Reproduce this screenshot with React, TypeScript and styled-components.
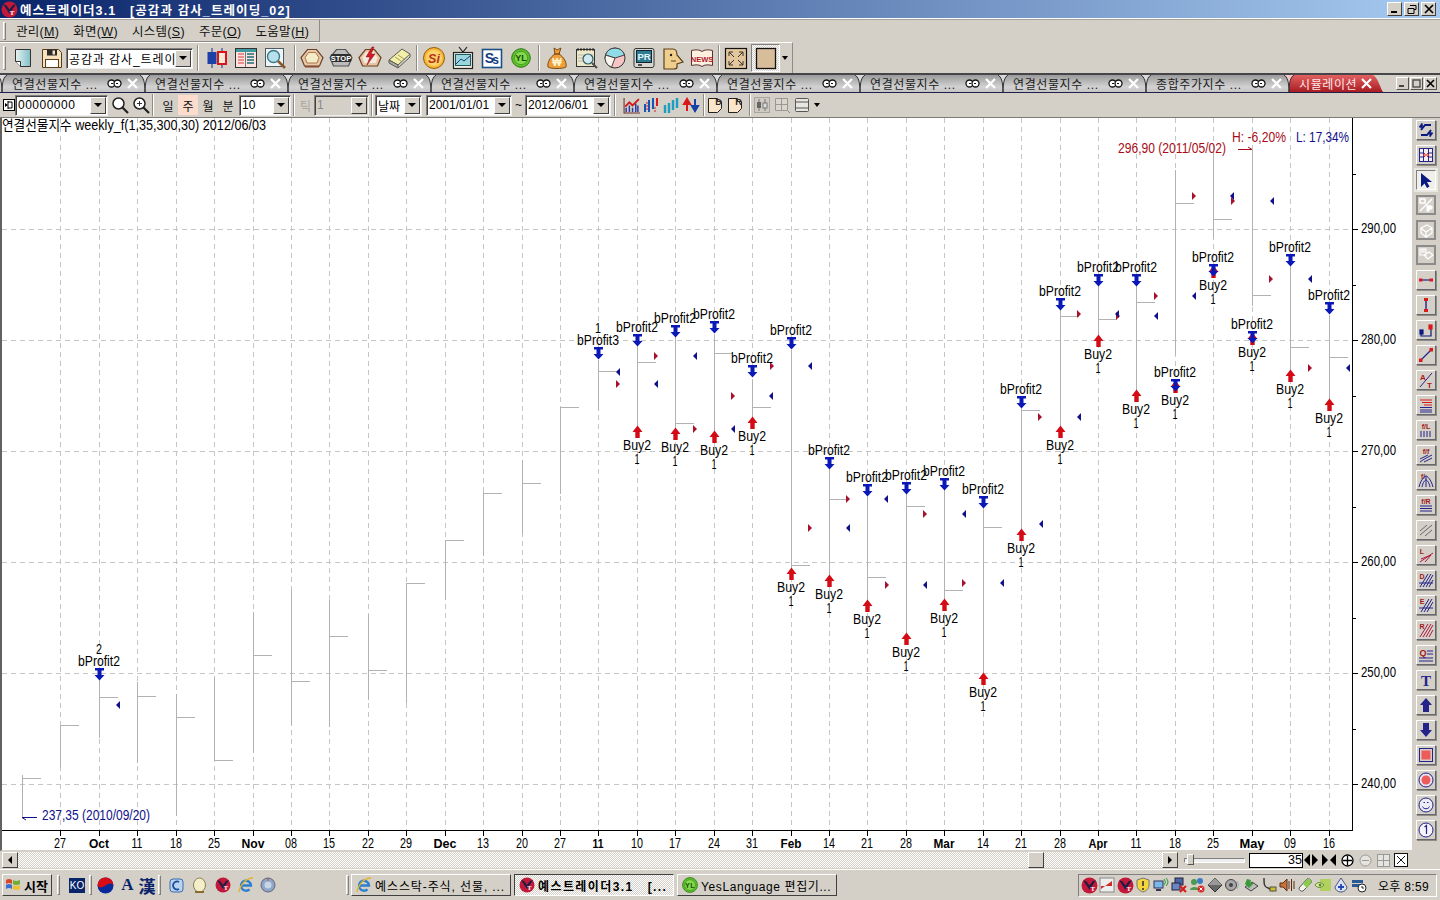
import React from 'react';
import styled, { createGlobalStyle } from 'styled-components';

const UI_FONT = `"Liberation Sans", "Noto Sans CJK KR", sans-serif`;

const GlobalStyle = createGlobalStyle`
	html, body { margin: 0; padding: 0; background: #d4d0c8; overflow: hidden; }
	* { box-sizing: border-box; }
`;

// bars: x, high, low, close
const BARS: number[][] = [
	[22, 775, 817, 778], [60, 725, 768, 725], [99, 680, 738, 697], [137, 682, 763, 696],
	[176, 694, 816, 717], [214, 677, 760, 760], [253, 612, 753, 655], [291, 590, 725, 681],
	[329, 600, 727, 636], [368, 615, 700, 670], [406, 583, 703, 583], [445, 540, 600, 540],
	[483, 492, 556, 493], [522, 460, 534, 483], [560, 407, 494, 407], [598, 360, 410, 371],
	[637, 345, 435, 362], [675, 335, 430, 423], [714, 335, 435, 353], [752, 380, 425, 407],
	[791, 350, 570, 565], [829, 470, 578, 499], [867, 497, 603, 577], [906, 493, 636, 506],
	[944, 490, 600, 590], [983, 510, 675, 527], [1021, 410, 530, 410], [1060, 310, 430, 316],
	[1098, 285, 337, 319], [1136, 285, 392, 302], [1175, 170, 355, 203], [1213, 152, 238, 219],
	[1252, 150, 306, 295], [1290, 265, 372, 347], [1329, 315, 400, 357],
];

const BUYS: number[][] = [
	[637, 445], [675, 447], [714, 450], [752, 436], [791, 587], [829, 594], [867, 619], [906, 652],
	[944, 618], [983, 692], [1021, 548], [1060, 445], [1098, 354], [1136, 409], [1175, 400],
	[1213, 285], [1252, 352], [1290, 389], [1329, 418],
];

const PROFITS: [number, number, string?][] = [
	[99, 661, '2'], [598, 340, '1'], [637, 327], [675, 318], [714, 314], [752, 358], [791, 330],
	[829, 450], [867, 477], [906, 475], [944, 471], [983, 489], [1021, 389], [1060, 291],
	[1098, 267], [1136, 267], [1175, 372], [1213, 257], [1252, 324], [1290, 247], [1329, 295],
];

const RED_MARKS: number[][] = [
	[618, 384], [656, 356], [695, 429], [733, 396], [772, 366], [810, 528], [848, 499], [887, 585],
	[925, 514], [964, 583], [1040, 417], [1079, 314], [1118, 316], [1156, 296], [1194, 196],
	[1233, 201], [1271, 279], [1310, 368],
];

const BLUE_MARKS: number[][] = [
	[118, 705], [618, 372], [656, 384], [695, 356], [733, 429], [771, 396], [810, 366], [848, 528],
	[886, 499], [925, 585], [964, 514], [1002, 583], [1041, 524], [1079, 417], [1117, 314],
	[1156, 316], [1194, 296], [1232, 196], [1272, 201], [1310, 279], [1348, 368],
];

// x, label, drawn width, bold
const X_TICKS: [number, string, number, boolean?][] = [
	[60, '27', 12], [99, 'Oct', 20, true], [137, '11', 11], [176, '18', 12], [214, '25', 12], [253, 'Nov', 23, true],
	[291, '08', 12], [329, '15', 12], [368, '22', 12], [406, '29', 12], [445, 'Dec', 23, true], [483, '13', 12],
	[522, '20', 12], [560, '27', 12], [598, '11', 11, true], [637, '10', 12], [675, '17', 12], [714, '24', 12],
	[752, '31', 12], [791, 'Feb', 21, true], [829, '14', 12], [867, '21', 12], [906, '28', 12], [944, 'Mar', 21, true],
	[983, '14', 12], [1021, '21', 12], [1060, '28', 12], [1098, 'Apr', 19, true], [1136, '11', 11], [1175, '18', 12],
	[1213, '25', 12], [1252, 'May', 25, true], [1290, '09', 12], [1329, '16', 12],
];

const PRICE_LINES: [number, string][] = [
	[229, '290,00'], [340, '280,00'], [451, '270,00'], [562, '260,00'], [673, '250,00'], [784, '240,00'],
];
const MINOR_TICKS = [174, 285, 396, 507, 618, 729];

const Window = styled.div`
	width: 1440px;
	height: 900px;
	display: flex;
	flex-direction: column;
	background: #d4d0c8;
	font-family: ${UI_FONT};
	font-size: 12px;
	color: #000;
	overflow: hidden;
`;

const TitleBar = styled.div`
	height: 18px;
	flex: none;
	display: flex;
	align-items: center;
	padding-left: 1px;
	background: linear-gradient(90deg, #0a246a 0%, #a6caf0 100%);
	color: #fff;
	font-weight: 700;
	font-size: 12.5px;
	letter-spacing: 1.1px;
	white-space: pre;
`;

const TitleText = styled.span`
	margin-left: 2px;
	flex: 1;
`;

const CaptionButtons = styled.div`
	display: flex;
	gap: 2px;
	margin-right: 4px;
`;

const CaptionButton = styled.div`
	width: 15px;
	height: 14px;
	background: #d4d0c8;
	border: 1px solid;
	border-color: #fff #404040 #404040 #fff;
	display: flex;
	align-items: center;
	justify-content: center;
`;

const TitleRule = styled.div`
	height: 2px;
	flex: none;
	background: #fff;
	border-bottom: 1px solid #a5a29b;
`;

const MenuRow = styled.div`
	height: 22px;
	flex: none;
	display: flex;
	align-items: stretch;
`;

const MenuBand = styled.div`
	width: 320px;
	display: flex;
	align-items: center;
	padding-left: 3px;
	border-right: 1px solid #8f8c85;
	border-bottom: 1px solid #8f8c85;
	font-size: 12.5px;
	letter-spacing: 0.3px;
`;

const Grip = styled.div<{ $h: number; $mr?: number }>`
	width: 3px;
	height: ${p => p.$h}px;
	flex: none;
	margin-right: ${p => p.$mr ?? 0}px;
	border: 1px solid;
	border-color: #fff #808080 #808080 #fff;
`;

const MenuItem = styled.span`
	margin-left: 10px;
	margin-right: 4px;
	color: #111;
	u { text-underline-offset: 1px; }
`;

const ToolRow = styled.div`
	height: 31px;
	flex: none;
	display: flex;
`;

const ToolBand = styled.div`
	width: 793px;
	display: flex;
	align-items: center;
	padding-left: 3px;
	border-top: 1px solid #fff;
	border-right: 1px solid #8f8c85;
`;

const ToolSlot = styled.div<{ $w?: number }>`
	width: ${p => p.$w ?? 29}px;
	height: 28px;
	flex: none;
	display: flex;
	align-items: center;
	justify-content: center;
`;

const PressedSlot = styled(ToolSlot)`
	margin-left: 1px;
	background: repeating-conic-gradient(#d4d0c8 0 25%, #fff 0 50%) 0 0 / 2px 2px;
	border: 1px solid;
	border-color: #808080 #fff #fff #808080;
`;

const ToolSep = styled.div<{ $ml?: number; $mr?: number; $h?: number }>`
	width: 2px;
	height: ${p => p.$h ?? 26}px;
	flex: none;
	margin-left: ${p => p.$ml ?? 2}px;
	margin-right: ${p => p.$mr ?? 2}px;
	border-left: 1px solid #8f8c85;
	border-right: 1px solid #fff;
`;

const Combo = styled.div<{ $w: number; $off?: boolean; $ml?: number; $ls?: number }>`
	width: ${p => p.$w}px;
	height: 21px;
	flex: none;
	margin-left: ${p => p.$ml ?? 0}px;
	display: flex;
	align-items: center;
	border: 1px solid;
	border-color: #808080 #eee #eee #808080;
	box-shadow: inset 1px 1px 0 #404040;
	padding-left: 2px;
	letter-spacing: ${p => p.$ls ?? 0}px;
	color: ${p => (p.$off ? '#8a8a8a' : '#000')};
	background: ${p => (p.$off ? '#d4d0c8' : '#fff')};
	white-space: nowrap;
	overflow: hidden;
`;

const ComboText = styled.span`
	flex: 1;
	overflow: hidden;
`;

const ComboDrop = styled.span`
	width: 16px;
	height: 17px;
	flex: none;
	margin-right: 1px;
	background: #d4d0c8;
	border: 1px solid;
	border-color: #fff #404040 #404040 #fff;
	display: flex;
	align-items: center;
	justify-content: center;
	&::after {
		content: '';
		border-left: 4px solid transparent;
		border-right: 4px solid transparent;
		border-top: 4px solid #000;
	}
`;

const TabRow = styled.div`
	height: 20px;
	flex: none;
	display: flex;
	padding-left: 2px;
	border-top: 2px solid #46464a;
	border-bottom: 1px solid #20204a;
`;

const Tab = styled.div<{ $active?: boolean; $w?: number }>`
	width: ${p => p.$w ?? 143}px;
	flex: none;
	position: relative;
	display: flex;
	align-items: center;
	padding-left: 10px;
	font-size: 12px;
	letter-spacing: 0.6px;
	color: ${p => (p.$active ? '#ffe6e6' : '#1c1c1c')};
	white-space: nowrap;
	background: ${p =>
		p.$active ? 'linear-gradient(#e26060, #a81c22)' : 'linear-gradient(#9a9a9a, #d2d2d2 70%, #c4c4c4)'};
`;

const TabCurve = styled.svg`
	position: absolute;
	left: -5px;
	top: 0;
	width: 10px;
	height: 17px;
`;

const ActiveEnd = styled.svg`
	position: absolute;
	right: 0;
	top: 0;
	width: 10px;
	height: 17px;
`;

const TabLabel = styled.span<{ $w?: number }>`
	position: relative;
	width: ${p => p.$w ?? 95}px;
	flex: none;
`;

const TabClose = styled.span<{ $ml?: number }>`
	position: relative;
	margin-left: ${p => p.$ml ?? 5}px;
	display: flex;
`;

const TabLink = styled.span`
	position: relative;
	display: flex;
`;

const MdiButtons = styled.div`
	margin-left: auto;
	margin-right: 3px;
	display: flex;
	gap: 1px;
	align-items: center;
`;

const MdiButton = styled.div`
	width: 13px;
	height: 13px;
	background: #d4d0c8;
	border: 1px solid;
	border-color: #fff #555 #555 #fff;
	display: flex;
	align-items: center;
	justify-content: center;
`;

const ChartBar = styled.div`
	height: 25px;
	flex: none;
	display: flex;
	align-items: center;
	padding-left: 3px;
	border-bottom: 1px solid #7c7a74;
`;

const PeriodKey = styled.span<{ $on?: boolean; $off?: boolean; $w?: number }>`
	width: ${p => p.$w ?? 20}px;
	height: 20px;
	flex: none;
	display: flex;
	align-items: center;
	justify-content: center;
	font-size: 12px;
	background: ${p => (p.$on ? '#fbdccd' : 'transparent')};
	color: ${p => (p.$off ? '#a9a6a0' : '#111')};
`;

const Tilde = styled.span`
	width: 13px;
	text-align: center;
	flex: none;
`;

const BarSlot = styled.div<{ $w?: number }>`
	width: ${p => p.$w ?? 20}px;
	height: 22px;
	flex: none;
	display: flex;
	align-items: center;
	justify-content: center;
`;

const MainRow = styled.div`
	flex: 1;
	display: flex;
	min-height: 0;
`;

const ChartPane = styled.div`
	width: 1412px;
	flex: none;
	background: #fff;
	border-left: 2px solid #63625e;
	border-bottom: 1px solid #d4d0c8;
`;

const ChartSvg = styled.svg`
	display: block;
	width: 1410px;
	height: 732px;
`;

const ChartTextBase = styled.text<{ $c?: string; $bold?: boolean; $size?: number }>`
	font-family: ${UI_FONT};
	font-size: ${p => p.$size ?? 14}px;
	font-weight: ${p => (p.$bold ? 700 : 400)};
	fill: ${p => p.$c ?? '#000'};
	dominant-baseline: central;
`;

// the chart font is tall and narrow: the glyphs are squeezed to the width each label has
const ChartText = ({
	w,
	children,
	...rest
}: { w?: number; children: React.ReactNode } & React.ComponentProps<typeof ChartTextBase>) => (
	<ChartTextBase {...rest} {...(w ? { textLength: w, lengthAdjust: 'spacingAndGlyphs' } : {})}>
		{children}
	</ChartTextBase>
);

const SideTools = styled.div`
	flex: 1;
	display: flex;
	flex-direction: column;
	align-items: center;
	gap: 5px;
	padding-top: 2px;
`;

const SideButton = styled.div<{ $variant?: 'active' | 'muted' }>`
	width: 20px;
	height: 20px;
	flex: none;
	display: flex;
	align-items: center;
	justify-content: center;
	background: ${p => (p.$variant === 'active' ? '#f1efea' : '#d4d0c8')};
	border: ${p => (p.$variant === 'muted' ? '2px solid #8b8b8b' : '1px solid')};
	border-color: ${p =>
		p.$variant === 'muted'
			? '#8b8b8b'
			: p.$variant === 'active'
				? '#808080 #fff #fff #808080'
				: '#fff #66666e #66666e #fff'};
	box-shadow: ${p =>
		p.$variant === 'active' ? '0 0 0 2px #e9e7e2' : p.$variant === 'muted' ? 'none' : '1px 1px 0 #8f8c85'};
`;

const ScrollRow = styled.div`
	height: 18px;
	flex: none;
	display: flex;
	align-items: center;
	padding-left: 2px;
`;

const ScrollButton = styled.div`
	width: 16px;
	height: 16px;
	flex: none;
	background: #d4d0c8;
	border: 1px solid;
	border-color: #fff #404040 #404040 #fff;
	display: flex;
	align-items: center;
	justify-content: center;
`;

const ScrollTrack = styled.div`
	width: 1144px;
	height: 16px;
	flex: none;
	display: flex;
	justify-content: flex-end;
	padding-right: 118px;
	background: repeating-conic-gradient(#d4d0c8 0 25%, #fff 0 50%) 0 0 / 2px 2px;
`;

const ScrollThumb = styled.div`
	width: 16px;
	height: 16px;
	background: #d4d0c8;
	border: 1px solid;
	border-color: #fff #404040 #404040 #fff;
`;

const ZoomSlider = styled.div`
	width: 63px;
	height: 16px;
	flex: none;
	margin: 0 3px 0 5px;
	position: relative;
	&::before {
		content: '';
		position: absolute;
		left: 1px;
		right: 1px;
		top: 6px;
		height: 3px;
		border: 1px solid;
		border-color: #808080 #fff #fff #808080;
		background: #eee;
	}
`;

const ZoomHandle = styled.div`
	position: absolute;
	left: 4px;
	top: 2px;
	width: 7px;
	height: 11px;
	background: #d4d0c8;
	border: 1px solid;
	border-color: #fff #555 #555 #fff;
`;

const ZoomField = styled.div`
	width: 54px;
	height: 15px;
	flex: none;
	margin-right: -1px;
	background: #fff;
	border: 1px solid #000;
	text-align: right;
	font-size: 12.5px;
	line-height: 13px;
`;

const ZoomKey = styled.div<{ $w?: number }>`
	width: ${p => p.$w ?? 18}px;
	height: 16px;
	flex: none;
	display: flex;
	align-items: center;
	justify-content: center;
`;

const TaskBar = styled.div`
	height: 31px;
	flex: none;
	display: flex;
	align-items: center;
	padding: 0 3px 0 2px;
	border-top: 1px solid #fff;
	box-shadow: inset 0 1px 0 #d4d0c8;
`;

const StartButton = styled.div`
	width: 50px;
	height: 22px;
	flex: none;
	display: flex;
	align-items: center;
	gap: 3px;
	padding-left: 2px;
	font-weight: 700;
	font-size: 13px;
	background: #d4d0c8;
	border: 1px solid;
	border-color: #fff #404040 #404040 #fff;
`;

const TaskSep = styled.div<{ $ml: number; $mr: number }>`
	width: 3px;
	height: 20px;
	flex: none;
	margin-left: ${p => p.$ml}px;
	margin-right: ${p => p.$mr}px;
	border: 1px solid;
	border-color: #fff #808080 #808080 #fff;
`;

const LangBox = styled.div`
	width: 16px;
	height: 15px;
	flex: none;
	background: #0a246a;
	color: #fff;
	font-size: 10px;
	text-align: center;
	line-height: 15px;
`;

const QuickSlot = styled.div<{ $w?: number }>`
	width: ${p => p.$w ?? 23}px;
	height: 20px;
	flex: none;
	display: flex;
	align-items: center;
	justify-content: center;
`;

const LangLetter = styled.span`
	font-family: "Liberation Serif", "Noto Sans CJK KR", serif;
	font-weight: 700;
	font-size: 17px;
	color: #0a246a;
`;

const TaskButton = styled.div<{ $on?: boolean; $ls: number }>`
	width: 160px;
	height: 22px;
	flex: none;
	margin-right: 3px;
	display: flex;
	align-items: center;
	gap: 3px;
	padding-left: 4px;
	white-space: pre;
	overflow: hidden;
	letter-spacing: ${p => p.$ls}px;
	font-weight: ${p => (p.$on ? 700 : 400)};
	border: 1px solid;
	border-color: ${p => (p.$on ? '#404040 #fff #fff #404040' : '#fff #404040 #404040 #fff')};
	background: ${p =>
		p.$on ? 'repeating-conic-gradient(#d4d0c8 0 25%, #fff 0 50%) 0 0 / 2px 2px' : '#d4d0c8'};
`;

const Tray = styled.div`
	width: 359px;
	height: 23px;
	flex: none;
	margin-left: auto;
	display: flex;
	align-items: center;
	padding-left: 1px;
	border: 1px solid;
	border-color: #808080 #fff #fff #808080;
`;

const TraySlot = styled.div`
	width: 18px;
	height: 18px;
	flex: none;
	display: flex;
	align-items: center;
	justify-content: center;
`;

const Clock = styled.span`
	margin-left: 10px;
	letter-spacing: 0.3px;
	white-space: nowrap;
`;

const Icon = styled.svg`
	display: block;
	flex: none;
	overflow: visible;
`;

const IconText = styled.text<{ $size: number; $c: string; $serif?: boolean }>`
	font-family: ${p => (p.$serif ? '"Liberation Serif", serif' : UI_FONT)};
	font-size: ${p => p.$size}px;
	font-weight: 700;
	fill: ${p => p.$c};
	text-anchor: middle;
`;

type IconProps = { s?: number; children?: React.ReactNode };

// every little drawing below lives in its own 24-unit (toolbar) or 16-unit (small) box
const I = ({ s = 24, vb = 24, children }: IconProps & { vb?: number }) => (
	<Icon width={s} height={s} viewBox={`0 0 ${vb} ${vb}`}>
		{children}
	</Icon>
);

const VtLogo = ({ s = 16 }: { s?: number }) => (
	<I s={s} vb={16}>
		<circle cx="8" cy="8" r="7.5" fill="#c2183a" />
		<path d="M2 3l6 9 6-9-3 1-3 4-3-4z" fill="#1b1d44" />
		<IconText x="11" y="13" $size={6.5} $c="#fff" $serif>T</IconText>
	</I>
);

const YlBadge = ({ s = 20 }: { s?: number }) => (
	<I s={s} vb={20}>
		<circle cx="10" cy="10" r="9.3" fill="#5fbe2c" stroke="#2b7a14" />
		<circle cx="10" cy="10" r="6.6" fill="#86d84c" stroke="#2d8a18" strokeWidth=".6" />
		<IconText x="10" y="13.2" $size={9} $c="#114f0a">YL</IconText>
	</I>
);

const IeGlyph = ({ s = 16 }: { s?: number }) => (
	<I s={s} vb={16}>
		<path d="M3.500 8.500h9.500a5 5 0 10-1.500 3.800" fill="none" stroke="#2b7fd0" strokeWidth="2.400" />
		<path d="M1 15C2 8 8 1 15 1" fill="none" stroke="#e7b422" strokeWidth="1.300" />
	</I>
);

const NewDocIcon = () => (
	<I>
		<defs>
			<linearGradient id="docfill" x1="0" y1="0" x2="1" y2="0">
				<stop offset="0" stopColor="#e9f3f0" />
				<stop offset="1" stopColor="#7fbfc8" />
			</linearGradient>
		</defs>
		<path d="M4.5 3.5h15v17h-10l-5-5z" fill="url(#docfill)" stroke="#333" />
		<path d="M4.5 15.5h5v5" fill="#fff" stroke="#333" />
	</I>
);

const SaveIcon = () => (
	<I>
		<path d="M2.5 3.5h16l3 3v15h-19z" fill="#f6e2bf" stroke="#5a3c16" />
		<rect x="7" y="3.5" width="10" height="6" fill="#2b2b2b" />
		<rect x="12.5" y="4.5" width="2.5" height="4" fill="#f6e2bf" />
		<rect x="5.5" y="13.5" width="13" height="8" fill="#fff" stroke="#5a3c16" />
	</I>
);

const CandleIcon = () => (
	<I>
		<path d="M7 2v20M17 2v20" stroke="#1b2a88" />
		<rect x="2.5" y="6" width="9" height="12" fill="#1d3fa8" />
		<rect x="13" y="6" width="8" height="12" fill="#fbe9d8" stroke="#d81818" strokeWidth="2" />
	</I>
);

const GridSheetIcon = () => (
	<I>
		<rect x="1.5" y="2.5" width="21" height="19" fill="#fde3e0" stroke="#333" />
		<rect x="2" y="3" width="20" height="3" fill="#3f9aa0" />
		<path d="M4 8h6M4 11h6M4 14h6M4 17h6" stroke="#d93b3b" />
		<path d="M13 8h7M13 11h7M13 14h7M13 17h7" stroke="#1c6f78" strokeWidth="1.6" />
		<path d="M11.5 6v15" stroke="#777" />
	</I>
);

const LensDocIcon = () => (
	<I>
		<rect x="2.5" y="2.5" width="18" height="18" fill="#f0f4f6" stroke="#4b5b63" />
		<circle cx="10.5" cy="10.5" r="6" fill="#b8e0ec" stroke="#397a8a" strokeWidth="1.4" />
		<path d="M15 15l7 7" stroke="#8a5a2c" strokeWidth="2.6" />
	</I>
);

const hexPath = 'M7.5 3.500h9l6.500 8-3.500 8.500H4.500L1 11.500z';

const HexIcon = () => (
	<I>
		<path d={hexPath} fill="#e8c8a8" stroke="#6b4028" strokeWidth="1.2" />
		<path d="M8.500 6.500h7l3.500 5-2 5.500H7l-2-5.500z" fill="#f4ebc8" stroke="#a9754b" />
		<path d="M5 20h14v1.500H5z" fill="#8b4a2b" />
	</I>
);

const StopIcon = () => (
	<I>
		<path d={hexPath} fill="#bcbcbc" stroke="#555" strokeWidth="1.2" />
		<rect x="1.500" y="8" width="21" height="8" fill="#2d2d2d" rx="2" />
		<IconText x="12" y="14.600" $size={7.500} $c="#fff">STOP</IconText>
	</I>
);

const BoltIcon = () => (
	<I>
		<path d={hexPath} fill="#e8c4a0" stroke="#6b4028" strokeWidth="1.2" />
		<path d="M8 6h8l3.500 5.500-2 5.500H6.500l-2-5.500z" fill="#f5e9e0" />
		<path d="M14 1l-6 10h4l-3 8 8-11h-4l3-7z" fill="#d81a26" stroke="#7a1010" strokeWidth=".5" />
	</I>
);

const SlateIcon = () => (
	<I>
		<path d="M2 14L15 3l8 5-12 11z" fill="#f2efaa" stroke="#5a5a50" />
		<path d="M2 14l9 5v3l-9-5z" fill="#aaa" stroke="#5a5a50" />
		<path d="M11 22l12-11V8" fill="#d8d8c8" stroke="#5a5a50" />
		<path d="M8 11l6 4M11 9l6 4" stroke="#ab9c4a" />
	</I>
);

const SiIcon = () => (
	<I>
		<circle cx="12" cy="12" r="10.500" fill="#f7b733" stroke="#9a5a10" />
		<circle cx="12" cy="12" r="8" fill="#fbd36c" />
		<IconText x="12" y="16.500" $size={12.500} $c="#b8321a" style={{ fontStyle: 'italic' }}>Si</IconText>
	</I>
);

const TvIcon = () => (
	<I>
		<path d="M8 1l4 5 4-5" fill="none" stroke="#222" strokeWidth="1.2" />
		<rect x="2.500" y="6.500" width="19" height="16" fill="#f2efe0" stroke="#222" strokeWidth="1.2" />
		<rect x="4.500" y="8.500" width="15" height="11" fill="#9bd6dc" stroke="#1a5a66" />
		<path d="M5 18l5-5 3 2 6-5" fill="none" stroke="#163f80" />
	</I>
);

const SsIcon = () => (
	<I>
		<rect x="2.500" y="3.500" width="19" height="18" fill="#fff" stroke="#1c4f86" strokeWidth="1.600" />
		<IconText x="9.500" y="17" $size={14} $c="#143a80">S</IconText>
		<IconText x="15.500" y="18" $size={12} $c="#143a80">s</IconText>
	</I>
);

const BagIcon = () => (
	<I>
		<path d="M9 2l3 2 4-2-2 6c5 3 8 9 7 13-3 2-15 2-18 0-1-4 2-10 7-13z" fill="#ee9f3a" stroke="#7c4a12" />
		<path d="M9 8h6" stroke="#7c4a12" strokeWidth="1.400" />
		<IconText x="12" y="20" $size={10} $c="#fff6d0">₩</IconText>
	</I>
);

const CalendarIcon = () => (
	<I>
		<rect x="2.500" y="3.500" width="18" height="17" fill="#eee7c8" stroke="#333" />
		<path d="M4 2v3M7 2v3M10 2v3M13 2v3M16 2v3M19 2v3" stroke="#222" />
		<path d="M4 9h15M4 12h15M4 15h15" stroke="#bba" />
		<circle cx="14" cy="13" r="5" fill="#cfe9ef" stroke="#305a66" strokeWidth="1.200" />
		<path d="M18 17l5 5" stroke="#4a4a4a" strokeWidth="2" />
	</I>
);

const PieIcon = () => (
	<I>
		<circle cx="12" cy="12" r="10" fill="#f6c4c4" stroke="#333" />
		<path d="M2.500 9a10 10 0 0119 0l-9.500 3z" fill="#8fdce8" stroke="#444" />
		<path d="M12 12l-9.500-3a10 10 0 006 12.300z" fill="#f7f5ee" stroke="#444" />
	</I>
);

const PrIcon = () => (
	<I>
		<rect x="2" y="2.500" width="20" height="19" rx="2" fill="#d8d8d0" stroke="#333" />
		<rect x="4.500" y="4.500" width="15" height="12" fill="#2d7d92" stroke="#123" />
		<IconText x="12" y="14.300" $size={9.500} $c="#e8f6fa">PR</IconText>
		<path d="M6 19h4" stroke="#222" strokeWidth="1.500" />
	</I>
);

const FaceIcon = () => (
	<I>
		<path d="M3 3h9c3 0 4 3 4 6l6 7-6 2v3c0 1-1 2-3 2H3z" fill="#f0cf8e" stroke="#5c4218" strokeWidth="1.200" />
		<circle cx="10" cy="9" r="1.200" fill="#222" />
		<path d="M10 15h5" stroke="#5c4218" />
	</I>
);

const NewsIcon = () => (
	<I>
		<path d="M1.500 4.500c4-1 8-1 10.500 1 2.500-2 6.500-2 10.500-1v15c-4-1-8-1-10.500 1-2.500-2-6.500-2-10.500-1z" fill="#fdf0e0" stroke="#5b2f2f" />
		<IconText x="12" y="15.800" $size={7.500} $c="#b0182c">NEWS</IconText>
	</I>
);

const ExpandIcon = () => (
	<I>
		<rect x="1.500" y="2.500" width="21" height="20" fill="#e4c69c" stroke="#111" strokeWidth="1.200" />
		<path d="M5 6l5 5M19 6l-5 5M5 19l5-5M19 19l-5-5M5 6h4M5 6v4M19 6h-4M19 6v4M5 19h4M5 19v-4M19 19h-4M19 19v-4" stroke="#333" fill="none" />
	</I>
);

const SwatchIcon = () => (
	<I>
		<rect x="2.500" y="2.500" width="19" height="20" fill="#d8bd9a" stroke="#111" strokeWidth="1.300" />
	</I>
);

const TinyDrop = () => (
	<I s={8} vb={8}>
		<path d="M1 2h6L4 6z" fill="#000" />
	</I>
);

const PinIcon = () => (
	<I s={12} vb={12}>
		<rect x=".5" y=".5" width="11" height="11" fill="#fff" stroke="#000" />
		<path d="M5 2v8M5 3h4v6H5" fill="none" stroke="#000" />
		<path d="M2 4l3 2-3 2z" fill="#000" />
	</I>
);

const SearchIcon = ({ extra }: { extra?: boolean }) => (
	<I s={18} vb={18}>
		<circle cx="7.500" cy="7.500" r="5.500" fill="#fff" stroke="#222" strokeWidth="1.500" />
		<path d="M11.500 11.500l5.500 5.500" stroke="#222" strokeWidth="2.200" />
		{extra && <path d="M5 7.500h5M7.500 5v5" stroke="#333" />}
	</I>
);

const MiniChartIcon = () => (
	<I s={17} vb={16}>
		<path d="M1 1v14h15" fill="none" stroke="#6b3030" />
		<path d="M3 14V10M6 14V8M9 14V10M12 14V6M14 14V8" stroke="#2b3ea0" strokeWidth="1.400" />
		<path d="M2 9l4-4 3 3 6-6" fill="none" stroke="#d11b1b" strokeWidth="1.800" />
	</I>
);

const MiniBarsIcon = () => (
	<I s={16} vb={16}>
		<path d="M2 7v8M6 3v12M10 1v11" stroke="#1554b8" strokeWidth="2" />
		<path d="M14 1v8" stroke="#d81a1a" strokeWidth="2" />
		<path d="M4 5v9M12 10v5" stroke="#d81a1a" strokeWidth="1" strokeDasharray="2 1" />
	</I>
);

const RiseBarsIcon = () => (
	<I s={16} vb={16}>
		<path d="M2 8v8M6 6v10M10 3v10M14 1v10" stroke="#1a9fc0" strokeWidth="2.400" />
	</I>
);

const UpDownIcon = () => (
	<I s={16} vb={16}>
		<path d="M4 14V6M1 7l3-5 3 5z" stroke="#d81a1a" strokeWidth="2" fill="#d81a1a" />
		<path d="M12 2v8M9 9l3 5 3-5z" stroke="#1540a8" strokeWidth="2" fill="#1540a8" />
	</I>
);

const PageLetterIcon = ({ letter }: { letter: string }) => (
	<I s={18} vb={18}>
		<path d="M2.500 2.500h9v3h4v7l-4 4h-9z" fill="#fbe6cc" stroke="#222" />
		<IconText x="12.500" y="9" $size={9} $c="#2a2a2a">{letter}</IconText>
	</I>
);

const GreyCandleIcon = () => (
	<I s={16} vb={16}>
		<rect x=".5" y=".5" width="15" height="15" fill="#cfcbc3" stroke="#a8a59e" />
		<path d="M5 2v12M11 2v12" stroke="#777" />
		<rect x="3" y="5" width="4" height="6" fill="#666" />
		<rect x="9" y="6" width="4" height="5" fill="#ddd" stroke="#777" />
	</I>
);

const GreyGridIcon = () => (
	<I s={16} vb={16}>
		<path d="M1.500 1.500h12v12h-12zM7.500 1.500v12M1.500 7.500h12" fill="#d9d6cf" stroke="#9b9892" />
		<path d="M14 14l2 2" stroke="#888" />
	</I>
);

const WindowBoxIcon = () => (
	<I s={16} vb={16}>
		<rect x="1.500" y="1.500" width="13" height="13" rx="1" fill="#e8e6e0" stroke="#555" />
		<path d="M2 5h12M2 11h12" stroke="#555" />
	</I>
);

const LinkGlyph = () => (
	<I s={15} vb={15}>
		<circle cx="4.500" cy="7.500" r="3.500" fill="#fff" stroke="#111" strokeWidth="1.300" />
		<circle cx="10.500" cy="7.500" r="3.500" fill="#fff" stroke="#111" strokeWidth="1.300" />
		<path d="M4 7.500h2M9 7.500h2" stroke="#111" />
	</I>
);

const CloseGlyph = ({ c = '#fff' }: { c?: string }) => (
	<I s={11} vb={11}>
		<path d="M1 1l9 9M10 1l-9 9" stroke={c} strokeWidth="2.200" />
	</I>
);

const Curve = ({ bright }: { bright?: boolean }) => (
	<TabCurve viewBox="0 0 10 17">
		<path d="M0 0C3 2 5 6 5 17C5 6 7 2 10 0Z" fill={bright ? '#f3c8c8' : '#d9d9d9'} />
		<path d="M0 0C3 2 5 6 5 17C5 6 7 2 10 0" fill="none" stroke="#2e2e34" />
	</TabCurve>
);

// side tool faces, in a 16-unit box
const SIDE_FACES: { face: React.ReactNode; variant?: 'active' | 'muted' }[] = [
	{ face: <g fill="none" stroke="#0a1a80" strokeWidth="2"><path d="M13 3H7L3 8M3 13h6l4-5" /><path d="M1 5l3-4 1 5zM15 11l-3 4-1-5z" fill="#0a1a80" strokeWidth=".6" /></g> },
	{ face: <g><rect x="1.500" y="1.500" width="13" height="13" fill="#f4eef0" stroke="#23238a" /><path d="M5.500 1v14M10.500 1v14M1 6h4M1 10h4M11 6h4M11 10h4" stroke="#23238a" /><path d="M5 8h6M7 6L5 8l2 2M9 6l2 2-2 2" stroke="#d81a1a" fill="none" /></g> },
	{ face: <path d="M3 1v14l3.500-3.500L9 16l2.500-1.500L9 10h5z" fill="#0a1a80" />, variant: 'active' },
	{ face: <g stroke="#fff" fill="none" strokeWidth="1.500"><path d="M2 14L14 2" /><rect x="2" y="2" width="5" height="4" /><IconText x="11.500" y="14" $size={8} $c="#fff">P</IconText></g>, variant: 'muted' },
	{ face: <g fill="none" stroke="#fff" strokeWidth="1.200"><path d="M3 6l6-3 5 3-6 4zM3 6v5l5 4V10M14 6v5l-6 4" /></g>, variant: 'muted' },
	{ face: <g fill="none" stroke="#fff" strokeWidth="1.200"><path d="M2 2h6v6H2zM6 8l5-3 4 3-5 4z" /><path d="M4 2v4M6 2v4" /></g>, variant: 'muted' },
	{ face: <g><path d="M2 8h12" stroke="#23238a" strokeWidth="1.200" /><rect x="1" y="6.500" width="3.500" height="3" fill="#d81a1a" /><rect x="11.500" y="6.500" width="3.500" height="3" fill="#d81a1a" /></g> },
	{ face: <g><path d="M8 2v12" stroke="#23238a" strokeWidth="1.400" /><rect x="6" y="1" width="4" height="3" fill="#d81a1a" /><rect x="6" y="12" width="4" height="3" fill="#d81a1a" /></g> },
	{ face: <g fill="none" stroke="#0a1a80" strokeWidth="1.200"><path d="M3 9v5h10V3" /><rect x="2" y="8" width="3" height="4" fill="#0a1a80" /><rect x="11" y="3" width="3" height="4" fill="#d81a1a" stroke="#d81a1a" /></g> },
	{ face: <g><path d="M2 14L14 2" stroke="#23238a" strokeWidth="1.300" /><rect x="1" y="11.500" width="3.500" height="3.500" fill="#d81a1a" /><rect x="11.500" y="1" width="3.500" height="3.500" fill="#d81a1a" /></g> },
	{ face: <g><path d="M2 15L14 1" stroke="#23238a" /><IconText x="5" y="8" $size={8} $c="#b01818">A</IconText><IconText x="11.500" y="15.500" $size={8} $c="#b01818">T</IconText></g> },
	{ face: <g><path d="M2 3h12M4 5.500h10M6 8h8" stroke="#d81a1a" /><path d="M2 10.500h12M2 13h12M2 15h12" stroke="#23238a" /></g> },
	{ face: <g><IconText x="8" y="7" $size={7} $c="#a01818">f/L</IconText><path d="M3 9v6M6 9v6M9 9v6M12 9v6" stroke="#23238a" /></g> },
	{ face: <g><IconText x="8" y="7" $size={7} $c="#a01818">f/f</IconText><path d="M2 15C6 12 10 10 14 8M2 12l8-4M6 15l8-4" stroke="#23238a" fill="none" /></g> },
	{ face: <g><IconText x="5" y="7" $size={6.500} $c="#a01818">f/</IconText><path d="M1 15C3 7 7 4 8 4s5 3 7 11M4 15C5 10 7 8 8 8s3 2 4 7M8 4v11" stroke="#23238a" fill="none" /></g> },
	{ face: <g><IconText x="8" y="7" $size={7} $c="#a01818">f/R</IconText><path d="M2 9h12M2 11.500h12M2 14h12" stroke="#23238a" /></g> },
	{ face: <path d="M2 13L14 3M2 9l7-6M7 14l7-6" stroke="#666" fill="none" /> },
	{ face: <g><IconText x="4" y="7" $size={7} $c="#a01818">L</IconText><path d="M2 15l13-9M7 15l6-7M3 12l10-4" stroke="#b01840" fill="none" /></g> },
	{ face: <g><IconText x="4" y="7" $size={7} $c="#a01818">D</IconText><path d="M2 15l8-13M5 15l8-13M8 15l7-12M11 15l4-7M1 11h14" stroke="#23238a" fill="none" /></g> },
	{ face: <g><IconText x="4" y="7" $size={7} $c="#a01818">E</IconText><path d="M3 15l8-13M6 15l8-13M9 15l6-10M1 11h14" stroke="#23238a" fill="none" /></g> },
	{ face: <g><IconText x="4" y="7" $size={7} $c="#a01818">R</IconText><path d="M2 15l8-13M5 15l8-13M8 15l7-12M11 15l4-7" stroke="#b01840" fill="none" /></g> },
	{ face: <g><IconText x="5" y="9" $size={9} $c="#a01818">Q</IconText><path d="M9 4h6M9 7h6M1 11h14M1 14h14" stroke="#23238a" /></g> },
	{ face: <IconText x="8" y="14" $size={15} $c="#23238a" $serif>T</IconText> },
	{ face: <path d="M8 1l6 7h-3v7H5V8H2z" fill="#23238a" /> },
	{ face: <path d="M8 15l6-7h-3V1H5v7H2z" fill="#23238a" /> },
	{ face: <g><rect x="1.500" y="1.500" width="13" height="13" fill="#d4d0c8" stroke="#23238a" /><rect x="3.500" y="3.500" width="9" height="9" fill="#ef5a5a" /></g> },
	{ face: <g><circle cx="8" cy="8" r="7" fill="#e4e0ec" stroke="#23238a" /><circle cx="8" cy="8" r="4.500" fill="#ef5a5a" /></g> },
	{ face: <g fill="none" stroke="#23238a"><circle cx="8" cy="8" r="7" fill="#ececf4" /><path d="M4.500 9.500c1 3 6 3 7 0M5.500 5.500h1.500M9 5.500h1.500" /></g> },
	{ face: <g fill="none" stroke="#23238a"><circle cx="8" cy="8" r="7" fill="#f4f4fa" /><path d="M6.500 5l2-1.500v8.500" strokeWidth="1.200" /></g> },
];

// tray icons, in a 16-unit box
const TRAY_ICONS: React.ReactNode[] = [
	<VtLogo key="a" s={17} />,
	<I key="b" s={16} vb={16}><rect x="1" y="1" width="14" height="14" fill="#eee" stroke="#888" /><path d="M2 12L13 4v5H2z" fill="#d02828" /></I>,
	<VtLogo key="c" s={17} />,
	<I key="d" s={16} vb={16}><path d="M8 1l6 2v5c0 4-3 6-6 7-3-1-6-3-6-7V3z" fill="#f5d53c" stroke="#777" /><path d="M8 4v5M8 11v2" stroke="#333" strokeWidth="1.600" /></I>,
	<I key="e" s={16} vb={16}><rect x="1" y="4" width="9" height="7" fill="#7ab8ea" stroke="#335" /><path d="M3 13h5" stroke="#335" strokeWidth="2" /><path d="M11 2q3 3 0 6M13 1q4 4 0 8" stroke="#2a9a3a" fill="none" /></I>,
	<I key="f" s={16} vb={16}><rect x="4" y="1" width="8" height="7" fill="#4a66a8" stroke="#223" /><rect x="1" y="6" width="8" height="7" fill="#6a86c8" stroke="#223" /><path d="M9 9l6 6M15 9l-6 6" stroke="#d81a1a" strokeWidth="2" /></I>,
	<I key="g" s={16} vb={16}><circle cx="5" cy="5" r="3" fill="#4a9a4a" /><circle cx="11" cy="4" r="3" fill="#3a7ac8" /><path d="M1 13c0-4 9-4 9 0z" fill="#4a9a4a" /><circle cx="12" cy="12" r="3.500" fill="#d82a2a" /><path d="M10.500 10.500l3 3M13.500 10.500l-3 3" stroke="#fff" /></I>,
	<I key="h" s={16} vb={16}><path d="M8 1l7 7-7 7-7-7z" fill="#666" stroke="#333" /><path d="M8 1l7 7H1z" fill="#9a9a9a" /></I>,
	<I key="i" s={16} vb={16}><circle cx="6" cy="8" r="5.500" fill="#a8a8a8" stroke="#444" /><circle cx="6" cy="8" r="2" fill="#444" /><path d="M12 4q3 4 0 8" stroke="#9ab" fill="none" /></I>,
	<I key="j" s={16} vb={16}><path d="M2 10l7-5 6 4-7 5z" fill="#bbb" stroke="#444" /><path d="M4 2l4 1-1 3 4 0-5 5-4-4z" fill="#3a9a3a" /></I>,
	<I key="k" s={16} vb={16}><path d="M3 1c0 6 0 9 4 10l5 3" stroke="#333" fill="none" strokeWidth="1.400" /><rect x="9" y="10" width="6" height="4" fill="#cdbb30" stroke="#554" /></I>,
	<I key="l" s={16} vb={16}><path d="M1 6h3l4-4v12l-4-4H1z" fill="#c8713a" stroke="#5a2d10" /><path d="M10 4v8M12.500 2v12M15 4v8" stroke="#5a2d10" /></I>,
	<I key="m" s={16} vb={16}><path d="M2 11L10 2a3 3 0 014 4l-8 8a3 3 0 01-4-3z" fill="#f4f4ec" stroke="#556" /><path d="M6 7l4 4 4-5a3 3 0 00-4-4z" fill="#8acb4a" /></I>,
	<I key="n" s={16} vb={16}><rect x="5" y="2" width="11" height="12" fill="#b0d060" /><path d="M0 8q4-5 9 0q-5 5-9 0z" fill="#e8f4c8" stroke="#5a8a1a" /><circle cx="5" cy="8" r="1.500" fill="#5a8a1a" /></I>,
	<I key="o" s={16} vb={16}><path d="M8 1l6 9a6 5 0 11-12 0z" fill="#d8e4f4" stroke="#557" /><path d="M8 7v6M5 10h6" stroke="#2244bb" strokeWidth="1.800" /></I>,
	<I key="p" s={16} vb={16}><path d="M1 3h11v3H1zM1 7h8v3H1z" fill="#2a5a96" /><circle cx="11" cy="11" r="4" fill="#fff" stroke="#222" /><path d="M11 9v2h2" stroke="#222" fill="none" /></I>,
];

const UpArrow = ({ x, y }: { x: number; y: number }) => (
	<path transform={`translate(${x + 0.5} ${y})`} d="M0 -6.500L5 0H2.200V6H-2.200V0H-5Z" fill="#d40a14" />
);

const DownArrow = ({ x, y }: { x: number; y: number }) => (
	<path transform={`translate(${x + 0.5} ${y})`} d="M-4.500 -6H4.500V-3.500H2V1H5L0 6.500L-5 1H-2V-3.500H-4.500Z" fill="#0a18b8" />
);

const Chart = () => (
	<ChartSvg viewBox="2 118 1410 732">
		<g shapeRendering="crispEdges" stroke="#c6c6c6" strokeDasharray="5 4">
			{X_TICKS.map(([x]) => (
				<line key={x} x1={x + 0.5} x2={x + 0.5} y1={118} y2={830} />
			))}
			{PRICE_LINES.map(([y]) => (
				<line key={y} x1={2} x2={1353} y1={y + 0.5} y2={y + 0.5} />
			))}
		</g>

		<g shapeRendering="crispEdges" stroke="#b2b2b2">
			{BARS.map(([x, hi, lo, close]) => (
				<g key={x}>
					<line x1={x + 0.5} x2={x + 0.5} y1={hi} y2={lo} />
					<line x1={x} x2={x + 19} y1={close + 0.5} y2={close + 0.5} />
				</g>
			))}
		</g>

		{RED_MARKS.map(([x, y]) => (
			<path key={`r${x}${y}`} d={`M${x - 2} ${y - 4}L${x + 2} ${y}L${x - 2} ${y + 4}Z`} fill="#a8102c" />
		))}
		{BLUE_MARKS.map(([x, y]) => (
			<path key={`b${x}${y}`} d={`M${x + 2} ${y - 4}L${x - 2} ${y}L${x + 2} ${y + 4}Z`} fill="#10108c" />
		))}

		{BUYS.map(([x, y]) => (
			<g key={x}>
				<UpArrow x={x} y={y - 13} />
				<ChartText x={x} y={y} textAnchor="middle" w={28}>Buy2</ChartText>
				<ChartText x={x} y={y + 14} textAnchor="middle" w={5}>1</ChartText>
			</g>
		))}
		{PROFITS.map(([x, y, count]) => (
			<g key={x}>
				<DownArrow x={x} y={y + 13} />
				<ChartText x={x} y={y} textAnchor="middle" w={42}>bProfit{x === 598 ? '3' : '2'}</ChartText>
				{count && <ChartText x={x} y={y - 12} textAnchor="middle" w={6}>{count}</ChartText>}
			</g>
		))}

		<ChartText x={2} y={125} w={264}>연결선물지수 weekly_f(1,35,300,30)  2012/06/03</ChartText>
		<ChartText x={1232} y={137} $c="#a80c18" w={54}>H: -6,20%</ChartText>
		<ChartText x={1296} y={137} $c="#10108c" w={53}>L: 17,34%</ChartText>
		<ChartText x={1118} y={148} $c="#a80c18" w={108}>296,90 (2011/05/02)</ChartText>
		<path d="M1238 149.500H1252M1248 147L1252 149.500" fill="none" stroke="#a80c18" />
		<ChartText x={42} y={815} $c="#10108c" w={108}>237,35 (2010/09/20)</ChartText>
		<path d="M22 817.500H37M26 820L22 817.500" fill="none" stroke="#10108c" />

		<g shapeRendering="crispEdges" stroke="#000">
			<line x1={1352.5} x2={1352.5} y1={118} y2={830} />
			<line x1={2} x2={1353} y1={830.5} y2={830.5} />
			{X_TICKS.map(([x]) => (
				<line key={x} x1={x + 0.5} x2={x + 0.5} y1={830} y2={836} />
			))}
			{PRICE_LINES.map(([y]) => (
				<line key={y} x1={1353} x2={1358} y1={y + 0.5} y2={y + 0.5} />
			))}
			{MINOR_TICKS.map(y => (
				<line key={y} x1={1353} x2={1356} y1={y + 0.5} y2={y + 0.5} />
			))}
		</g>
		{PRICE_LINES.map(([y, label]) => (
			<ChartText key={label} x={1361} y={y - 1} w={35}>{label}</ChartText>
		))}
		{X_TICKS.map(([x, label, w, bold]) => (
			<ChartText key={x} x={x} y={843} textAnchor="middle" $bold={bold} $size={bold ? 13.5 : 14} w={w}>
				{label}
			</ChartText>
		))}
	</ChartSvg>
);

const TOOL_GROUPS: { icons: React.ReactNode[]; ml: number; mr: number }[] = [
	{ icons: [<CandleIcon key="1" />, <GridSheetIcon key="2" />, <LensDocIcon key="3" />], ml: 5, mr: 1 },
	{ icons: [<HexIcon key="1" />, <StopIcon key="2" />, <BoltIcon key="3" />, <SlateIcon key="4" />], ml: 3, mr: 1 },
	{ icons: [<SiIcon key="1" />, <TvIcon key="2" />, <SsIcon key="3" />, <YlBadge key="4" />], ml: 3, mr: 2 },
	{
		icons: [<BagIcon key="1" />, <CalendarIcon key="2" />, <PieIcon key="3" />, <PrIcon key="4" />, <FaceIcon key="5" />, <NewsIcon key="6" />],
		ml: 2,
		mr: 1,
	},
];

const App = () => (
	<Window>
		<GlobalStyle />
		<TitleBar>
			<VtLogo s={17} />
			<TitleText>예스트레이더3.1   [공감과 감사_트레이딩_02]</TitleText>
			<CaptionButtons>
				<CaptionButton><I s={10} vb={10}><path d="M1 8h6" stroke="#000" strokeWidth="2" /></I></CaptionButton>
				<CaptionButton><I s={10} vb={10}><path d="M3 1.500h6v4H7M1 4.500h6v5H1z" fill="none" stroke="#000" /></I></CaptionButton>
				<CaptionButton><I s={10} vb={10}><path d="M1 1l8 8M9 1L1 9" stroke="#000" strokeWidth="1.700" /></I></CaptionButton>
			</CaptionButtons>
		</TitleBar>
		<TitleRule />

		<MenuRow>
			<MenuBand>
				<Grip $h={18} />
				<MenuItem>관리(<u>M</u>)</MenuItem>
				<MenuItem>화면(<u>W</u>)</MenuItem>
				<MenuItem>시스템(<u>S</u>)</MenuItem>
				<MenuItem>주문(<u>O</u>)</MenuItem>
				<MenuItem>도움말(<u>H</u>)</MenuItem>
			</MenuBand>
		</MenuRow>

		<ToolRow>
			<ToolBand>
				<Grip $h={24} $mr={2} />
				<ToolSlot><NewDocIcon /></ToolSlot>
				<ToolSlot><SaveIcon /></ToolSlot>
				<Combo $w={127} $ls={0.9}>
					<ComboText>공감과 감사_트레이</ComboText>
					<ComboDrop />
				</Combo>
				<ToolSep $ml={4} $mr={3} />
				{TOOL_GROUPS.map((group, i) => (
					<React.Fragment key={i}>
						{group.icons.map((icon, j) => (
							<ToolSlot key={j}>{icon}</ToolSlot>
						))}
						<ToolSep $ml={group.ml} $mr={group.mr} />
					</React.Fragment>
				))}
				<ToolSlot><ExpandIcon /></ToolSlot>
				<PressedSlot><SwatchIcon /></PressedSlot>
				<ToolSlot $w={10}><TinyDrop /></ToolSlot>
			</ToolBand>
		</ToolRow>

		<TabRow>
			{Array.from({ length: 8 }).map((_, i) => (
				<Tab key={i}>
					<Curve />
					<TabLabel>연결선물지수 ...</TabLabel>
					<TabLink><LinkGlyph /></TabLink>
					<TabClose><CloseGlyph /></TabClose>
				</Tab>
			))}
			<Tab>
				<Curve />
				<TabLabel>종합주가지수 ...</TabLabel>
				<TabLink><LinkGlyph /></TabLink>
				<TabClose><CloseGlyph /></TabClose>
			</Tab>
			<Tab $active $w={94}>
				<Curve bright />
				<TabLabel $w={62}>시뮬레이션</TabLabel>
				<TabClose $ml={0}><CloseGlyph /></TabClose>
				<ActiveEnd viewBox="0 0 10 17"><path d="M0 0C5 3 6 10 10 17H10V0Z" fill="#d4d0c8" /></ActiveEnd>
			</Tab>
			<MdiButtons>
				<MdiButton><I s={9} vb={9}><path d="M1 7h5" stroke="#444" strokeWidth="2" /></I></MdiButton>
				<MdiButton><I s={9} vb={9}><rect x="1" y="1" width="7" height="7" fill="none" stroke="#444" strokeWidth="1.300" /></I></MdiButton>
				<MdiButton><I s={9} vb={9}><path d="M1 1l7 7M8 1L1 8" stroke="#000" strokeWidth="1.600" /></I></MdiButton>
			</MdiButtons>
		</TabRow>

		<ChartBar>
			<PinIcon />
			<Combo $w={93} $ls={0.5}>
				<ComboText>00000000</ComboText>
				<ComboDrop />
			</Combo>
			<BarSlot $w={24}><SearchIcon /></BarSlot>
			<BarSlot $w={18}><SearchIcon extra /></BarSlot>
			<ToolSep $h={22} />
			<BarSlot $w={2} />
			<PeriodKey>일</PeriodKey>
			<PeriodKey $on>주</PeriodKey>
			<PeriodKey>월</PeriodKey>
			<PeriodKey>분</PeriodKey>
			<Combo $w={52} $ml={1}>
				<ComboText>10</ComboText>
				<ComboDrop />
			</Combo>
			<ToolSep $h={22} />
			<PeriodKey $off $w={17}>틱</PeriodKey>
			<Combo $w={55} $off>
				<ComboText>1</ComboText>
				<ComboDrop />
			</Combo>
			<ToolSep $h={22} />
			<Combo $w={47}>
				<ComboText>날짜</ComboText>
				<ComboDrop />
			</Combo>
			<Combo $w={86} $ml={4}>
				<ComboText>2001/01/01</ComboText>
				<ComboDrop />
			</Combo>
			<Tilde>~</Tilde>
			<Combo $w={86}>
				<ComboText>2012/06/01</ComboText>
				<ComboDrop />
			</Combo>
			<ToolSep $ml={3} $mr={5} $h={22} />
			<BarSlot><MiniChartIcon /></BarSlot>
			<BarSlot><MiniBarsIcon /></BarSlot>
			<BarSlot><RiseBarsIcon /></BarSlot>
			<BarSlot><UpDownIcon /></BarSlot>
			<ToolSep $ml={2} $mr={0} $h={22} />
			<BarSlot><PageLetterIcon letter="D" /></BarSlot>
			<BarSlot><PageLetterIcon letter="R" /></BarSlot>
			<ToolSep $ml={4} $mr={1} $h={22} />
			<BarSlot><GreyCandleIcon /></BarSlot>
			<BarSlot><GreyGridIcon /></BarSlot>
			<BarSlot><WindowBoxIcon /></BarSlot>
			<BarSlot $w={10}><TinyDrop /></BarSlot>
		</ChartBar>

		<MainRow>
			<ChartPane>
				<Chart />
			</ChartPane>
			<SideTools>
				{SIDE_FACES.map(({ face, variant }, i) => (
					<SideButton key={i} $variant={variant}>
						<I s={16} vb={16}>{face}</I>
					</SideButton>
				))}
			</SideTools>
		</MainRow>

		<ScrollRow>
			<ScrollButton><I s={8} vb={8}><path d="M6 0v8L2 4z" fill="#000" /></I></ScrollButton>
			<ScrollTrack><ScrollThumb /></ScrollTrack>
			<ScrollButton><I s={8} vb={8}><path d="M2 0v8l4-4z" fill="#000" /></I></ScrollButton>
			<ZoomSlider><ZoomHandle /></ZoomSlider>
			<ZoomField>35</ZoomField>
			<ZoomKey><I s={14} vb={14}><path d="M6 1v12L0 7zM8 1v12l6-6z" fill="#000" /></I></ZoomKey>
			<ZoomKey><I s={14} vb={14}><path d="M0 1v12l6-6zM14 1v12L8 7z" fill="#000" /></I></ZoomKey>
			<ZoomKey><I s={13} vb={13}><circle cx="6.500" cy="6.500" r="5.500" fill="#fff" stroke="#000" strokeWidth="1.300" /><path d="M2 6.500h9M6.500 2v9" stroke="#000" strokeWidth="1.300" /></I></ZoomKey>
			<ZoomKey><I s={13} vb={13}><circle cx="6.500" cy="6.500" r="5.500" fill="#e6e4de" stroke="#999" /><path d="M3 6.500h7" stroke="#999" /></I></ZoomKey>
			<ZoomKey><I s={13} vb={13}><rect x=".5" y=".5" width="12" height="12" fill="#e6e4de" stroke="#999" /><path d="M6.500 1v11M1 6.500h11" stroke="#999" /></I></ZoomKey>
			<ZoomKey><I s={14} vb={14}><rect x=".5" y=".5" width="13" height="13" fill="#fff" stroke="#111" /><path d="M3 3l8 8M11 3l-8 8" stroke="#111" /></I></ZoomKey>
		</ScrollRow>

		<TaskBar>
			<StartButton>
				<I s={16} vb={16}>
					<path d="M1 3q3-2 6 0v4q-3-2-6 0z" fill="#d8492c" />
					<path d="M8 3q3 2 7 0v4q-4 2-7 0z" fill="#6fae30" />
					<path d="M1 8q3-2 6 0v4q-3-2-6 0z" fill="#3c6ed0" />
					<path d="M8 8q3 2 7 0v4q-4 2-7 0z" fill="#f0c030" />
				</I>
				시작
			</StartButton>
			<TaskSep $ml={5} $mr={9} />
			<LangBox>KO</LangBox>
			<TaskSep $ml={4} $mr={2} />
			<QuickSlot>
				<I s={17} vb={17}>
					<circle cx="8.500" cy="8.500" r="8" fill="#0a2a9c" />
					<path d="M.5 8.500a8 8 0 0116 0c-2-3-5-2-8 0s-6 3-8 0z" fill="#d80c14" />
				</I>
			</QuickSlot>
			<QuickSlot $w={21}><LangLetter>A</LangLetter></QuickSlot>
			<QuickSlot $w={18}><LangLetter>漢</LangLetter></QuickSlot>
			<TaskSep $ml={2} $mr={4} />
			<QuickSlot>
				<I s={17} vb={17}><rect x="2" y="2" width="13" height="13" rx="3" fill="#b8d4f0" stroke="#3a6ab0" /><path d="M11 5a4 4 0 100 7" stroke="#1a4a9a" fill="none" strokeWidth="1.800" /></I>
			</QuickSlot>
			<QuickSlot>
				<I s={17} vb={17}><ellipse cx="8.500" cy="8" rx="6" ry="7" fill="#f4efc8" stroke="#8a8050" /><path d="M4 15h9" stroke="#8a6a30" strokeWidth="2" /></I>
			</QuickSlot>
			<QuickSlot><VtLogo /></QuickSlot>
			<QuickSlot><IeGlyph /></QuickSlot>
			<QuickSlot $w={22}>
				<I s={16} vb={16}><circle cx="8" cy="8" r="7" fill="#8ea6c8" stroke="#667" /><circle cx="8" cy="8" r="3.500" fill="#c8d4e8" /><path d="M8 1v3" stroke="#c05030" /></I>
			</QuickSlot>
			<TaskSep $ml={67} $mr={2} />
			<TaskButton $ls={0.9}><IeGlyph />예스스탁-주식, 선물, ...</TaskButton>
			<TaskButton $on $ls={1.4}><VtLogo />예스트레이더3.1   [...</TaskButton>
			<TaskButton $ls={0.6}><YlBadge s={16} />YesLanguage 편집기...</TaskButton>
			<Tray>
				{TRAY_ICONS.map((icon, i) => (
					<TraySlot key={i}>{icon}</TraySlot>
				))}
				<Clock>오후 8:59</Clock>
			</Tray>
		</TaskBar>
	</Window>
);

export default App;
